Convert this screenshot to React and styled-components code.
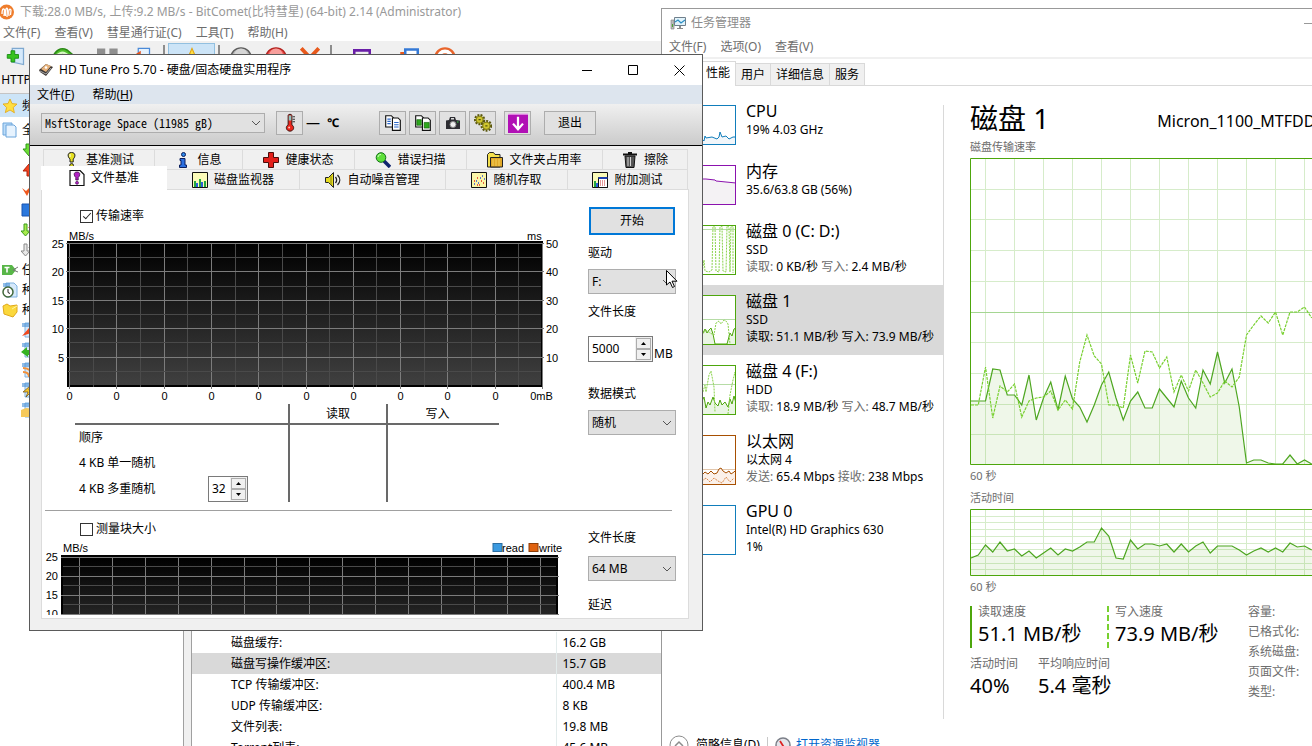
import { useState } from "react";
import styled, { createGlobalStyle, css } from "styled-components";

const GlobalStyle = createGlobalStyle`
  *, *::before, *::after {
    box-sizing: border-box;
  }

  body {
    margin: 0;
    background: #fff;
    color: #000;
    font-family: "Noto Sans", "Noto Sans CJK SC", sans-serif;
    font-size: 12px;
    line-height: 16px;
  }

  button, input, select {
    font: inherit;
    color: inherit;
    margin: 0;
    padding: 0;
    border-radius: 0;
  }

  svg {
    display: block;
    flex: none;
  }

  h1, h2, p, ul, dl, dd {
    margin: 0;
    padding: 0;
    font-weight: 400;
  }
`;

const Desktop = styled.main`
  position: relative;
  height: 100vh;
  overflow: hidden;
  white-space: nowrap;
`;

/* ---------- shared window parts ---------- */

const MenuBar = styled.nav`
  display: flex;
  flex: none;
  align-items: center;
  gap: ${(props) => props.$gap || 14}px;
  height: ${(props) => props.$height}px;
  padding-left: ${(props) => props.$indent}px;
  background: ${(props) => props.$bg || "transparent"};
  color: ${(props) => (props.$muted ? "#6d6d6d" : "#000")};
`;

const MenuItem = styled.button`
  border: 0;
  background: none;
`;

const Icon = ({ size = 16, children, ...rest }) => (
  <svg width={size} height={size} viewBox="0 0 16 16" aria-hidden="true" {...rest}>
    {children}
  </svg>
);

/* ---------- icons ---------- */

const CometIcon = () => (
  <Icon>
    <circle cx="6.500" cy="8" r="7.500" fill="#ef7d2c" />
    <path d="M2 10C2 4 4 4 4.500 6L4 12M5.500 12C5 4 7 3 7.500 5L7 13M9 12C8 5 10 4 11 6L10.500 11" stroke="#fff" strokeWidth="1.300" fill="none" />
  </Icon>
);

const DocIcon = ({ children }) => (
  <Icon>
    <path d="M4 1h8l3 3v11H4z" fill="#d5e9fb" stroke="#7fb2e0" />
    <path d="M1 1h7v4H1z" fill="#4b93d8" opacity=".6" />
    {children}
  </Icon>
);

const AddDocIcon = () => (
  <Icon size={20}>
    <path d="M5 1h9v13l-9-2z" fill="#d5e9fb" stroke="#7fa9d0" />
    <path d="M4 3h3v3h3v3H7v3H4V9H1V6h3z" fill="#35c31f" stroke="#168a10" strokeWidth=".7" />
  </Icon>
);

const StarIcon = ({ size }) => (
  <Icon size={size}>
    <path d="M8 1l2 4.600 5 .5-3.800 3.400 1.200 5.300L8 12l-4.700 2.600 1.300-5.100L1 6l5-.4z" fill="#ffdf42" stroke="#e2a412" strokeWidth=".8" />
  </Icon>
);

const PagesIcon = () => (
  <Icon>
    <path d="M1 1h9v12H1z" fill="#bcdcf8" stroke="#6da6dc" />
    <path d="M4 3h8l2 2v10H4z" fill="#e7f3fe" stroke="#6da6dc" />
  </Icon>
);

const ArrowIcon = ({ color, edge, up }) => (
  <Icon transform={up ? "rotate(180)" : undefined}>
    <path d="M5 2h5v5h4l-6 7-6-7h3z" fill={color} stroke={edge} />
  </Icon>
);

const SwapIcon = ({ color, edge, other }) => (
  <Icon>
    <path d="M3 2h3v7h3l-4.500 5L0 9h3z" fill={color} stroke={edge} />
    <path d="M10 14V6H7l4-4 4 4h-2v8z" fill={other} />
  </Icon>
);

const CheckIcon = () => (
  <Icon>
    <path d="M1 6l4 3 7-7-6 12z" fill="#f0581d" />
  </Icon>
);

const BlockIcon = () => (
  <Icon>
    <path d="M1 2h12v12H1z" fill="#2b78dd" stroke="#1b55b0" />
  </Icon>
);

const TagIcon = () => (
  <Icon>
    <path d="M0 3h10l4 5-4 5H0z" fill="#58b648" />
    <path d="M2.500 5.500h5M5 5.500v5" stroke="#fff" strokeWidth="1.600" />
    <path d="M11 8l5-3M11 8l5 2" stroke="#777" />
  </Icon>
);

const ClockIcon = () => (
  <DocIcon>
    <circle cx="6" cy="10" r="5" fill="#fff" stroke="#41683a" strokeWidth="1.500" />
    <path d="M6 7v3.500l2 1" stroke="#222" fill="none" />
  </DocIcon>
);

const FolderIcon = () => (
  <Icon>
    <path d="M1 4l4-2 3 2 7-1v7l-4 5-9-3z" fill="#fbd83c" stroke="#e0a91b" />
    <path d="M10 7l5-3" stroke="#fff3a0" />
  </Icon>
);

const DriveIcon = () => (
  <Icon>
    <path d="M1 8l7-6 7 3-7 9-6-4z" fill="#3c3633" />
    <path d="M3 7l5-5 5 2-5 6z" fill="#e6b27c" />
    <circle cx="8" cy="5.500" r="1.300" fill="#fff" />
    <path d="M2 9l6 3 5-6" stroke="#aaa" fill="none" />
  </Icon>
);

const MonitorIcon = () => (
  <Icon>
    <path d="M1 5h3v9H1z" fill="#bbb" stroke="#8a8a8a" strokeWidth=".7" />
    <path d="M2 9h1v3H2z" fill="#4aa530" />
    <path d="M4.500 2.500h11v8h-11z" fill="#e2f3fb" stroke="#70808c" />
    <path d="M5 7l3-2 3 3 4-3" stroke="#2a8ec4" fill="none" strokeWidth="1.200" />
    <path d="M9 11h2v2H9zM7 13h6v1H7z" fill="#8a8a8a" />
  </Icon>
);

const ThermoIcon = () => (
  <Icon size={20}>
    <path d="M6.500 2c0-1.300 3-1.300 3 0v7.500c2.600 1.500 1.400 5-1.500 5s-4.100-3.500-1.500-5z" fill="#e8261c" stroke="#3b1613" strokeWidth=".8" />
    <path d="M7 2h2v4H7z" fill="#8fc4c0" />
    <path d="M10 3h2M10 5h2M10 7h2" stroke="#333" strokeWidth=".8" />
    <circle cx="7.300" cy="11.500" r=".8" fill="#ffc2bb" />
  </Icon>
);

const CopyIcon = ({ picture }) => (
  <Icon size={18}>
    <path d="M1.500 1.500h5l2 2v8h-7z" fill="#fff" stroke="#111" />
    <path d="M7.500 3.500h5l2 2v9h-7z" fill="#fff" stroke="#111" />
    {picture ? (
      <path d="M2.500 5h4v5h-4zM9 7.500h4.500v5H9z" fill="#2da81c" stroke="#14620c" strokeWidth=".6" />
    ) : (
      <path d="M3 4.500h3M3 6.500h3M3 8.500h3M9 7.500h4M9 9.500h4M9 11.500h4" stroke="#2b67c9" />
    )}
  </Icon>
);

const CameraIcon = () => (
  <Icon size={16}>
    <path d="M1 5.500l3-.5 1-3h5l1 3 4 .5V14H1z" fill="#2e2e33" />
    <path d="M6 3h3v1.500H6z" fill="#ddd" />
    <circle cx="8" cy="9.500" r="3" fill="#efefef" stroke="#888" />
    <path d="M12 7h1.500" stroke="#39d048" />
  </Icon>
);

const GearsIcon = () => (
  <Icon size={18}>
    <circle cx="5" cy="5" r="3.800" fill="none" stroke="#59560d" strokeWidth="2.400" strokeDasharray="1.600 1" />
    <circle cx="5" cy="5" r="3" fill="#cfc62e" stroke="#8a8418" />
    <circle cx="11" cy="10.500" r="4" fill="none" stroke="#59560d" strokeWidth="2.400" strokeDasharray="1.600 1" />
    <circle cx="11" cy="10.500" r="3.200" fill="#cfc62e" stroke="#8a8418" />
    <path d="M4 5h2M10 10.500h2" stroke="#59560d" />
  </Icon>
);

const SaveIcon = () => (
  <Icon size={20}>
    <path d="M0 1h16v15H0z" fill="#b110b5" />
    <path d="M0 1h16" stroke="#e38be5" />
    <path d="M8 3v9M4 8.500l4 4.500 4-4.500" stroke="#fff" strokeWidth="1.800" fill="none" />
  </Icon>
);

const BulbIcon = () => (
  <Icon>
    <path d="M7.500.5c4.500 0 4 4.500 1.700 6.500V10H6V7C3.500 5 3 .5 7.500.5z" fill="#e6e021" stroke="#222" />
    <circle cx="7.600" cy="13.500" r="1.900" fill="#d6cf1c" stroke="#222" />
    <path d="M6 2v3" stroke="#fff" />
  </Icon>
);

const InfoIcon = () => (
  <Icon>
    <circle cx="8.500" cy="2.500" r="2" fill="#2b86e8" stroke="#0a1d5c" />
    <path d="M5 6.500h5V13h1.500v2.500H4.500V13H6V8.500H5z" fill="#2b6fe0" stroke="#0a1d5c" />
  </Icon>
);

const CrossIcon = () => (
  <Icon>
    <path d="M5.500.5h5v5h5v5h-5v5h-5v-5h-5v-5h5z" fill="#e3201b" stroke="#4b0c0a" />
  </Icon>
);

const LensIcon = () => (
  <Icon>
    <path d="M9 9l6 6" stroke="#10246e" strokeWidth="3.500" />
    <circle cx="6" cy="5.500" r="4.800" fill="#5ee03a" stroke="#14701a" />
    <path d="M3 5c0-2 2-2.500 3-2.500" stroke="#d8ffd0" fill="none" />
  </Icon>
);

const YellowFolderIcon = () => (
  <Icon>
    <path d="M.5 15V2.500l2-2h4l1.500 2h5V15z" fill="#f4e04e" stroke="#222" />
    <path d="M3.500 5.500h12V15h-12z" fill="#e0a828" stroke="#222" />
    <path d="M6 7v7M9 7v7M12 7v7" stroke="#f2cf5c" />
  </Icon>
);

const TrashIcon = () => (
  <Icon>
    <path d="M1 2.500h14M6 1h4" stroke="#111" strokeWidth="2" />
    <path d="M3 4h10l-1 11.500H4z" fill="#555" stroke="#111" />
    <path d="M6 5v9M8.500 5v9" stroke="#d5d5d5" />
  </Icon>
);

const FileBenchIcon = () => (
  <Icon>
    <path d="M1 .5h10l4 4v11H1z" fill="#fff" stroke="#111" strokeWidth="1.200" />
    <path d="M8 2c4 0 3 4 1.200 5.500V10H6.800V7.500C5 6 4 2 8 2z" fill="#b222c4" stroke="#3c0a44" strokeWidth=".8" />
    <circle cx="8" cy="12.800" r="1.500" fill="#b222c4" stroke="#3c0a44" strokeWidth=".6" />
  </Icon>
);

const BarsIcon = () => (
  <Icon>
    <path d="M.5.5h15v15H.5z" fill="#fbfbb8" stroke="#111" />
    <path d="M2 15V9h2v6M7 15V7h2v8M12 15V9h2v6" fill="#22a83c" />
    <path d="M4 15v-4h2v4M9 15v-5h2v5" fill="#2c5fd8" />
  </Icon>
);

const SpeakerIcon = () => (
  <Icon>
    <path d="M.5 5.500h3l5-5v15l-5-5h-3z" fill="#e6dc1f" stroke="#222" />
    <path d="M6 4v9" stroke="#8a8418" />
    <path d="M10.500 5c1.500 2 1.500 4 0 6M12.500 3c3 3 3 7 0 10" stroke="#222" fill="none" strokeWidth="1.300" />
  </Icon>
);

const DotsIcon = () => (
  <Icon>
    <path d="M.5.5h15v15H.5z" fill="#fbf6a8" stroke="#111" />
    <path d="M3 12h1M5 9h1M7 11h1M9 6h1M11 4h1M13 7h1" stroke="#2c4fd8" strokeWidth="1.500" />
    <path d="M3 9h1M6 6h1M8 13h1M10 9h1M12 11h1M6 13h1" stroke="#df2a1c" strokeWidth="1.500" />
  </Icon>
);

const ExtraIcon = () => (
  <Icon>
    <path d="M.5.5h15v15H.5z" fill="#fbfbb8" stroke="#111" />
    <path d="M2 15V9h2v6" fill="#22a83c" />
    <path d="M4 15v-4h2v4" fill="#2c5fd8" />
    <path d="M6.500 5.500h9v10h-9z" fill="#fff" stroke="#111" />
    <path d="M6.500 6h9" stroke="#1e3fae" strokeWidth="2" />
    <path d="M8 9h6M8 11h6M8 13h6" stroke="#c33" strokeDasharray="1 1" />
  </Icon>
);

const Chevron = styled((props) => (
  <svg width="10" height="6" viewBox="0 0 10 6" aria-hidden="true" {...props}>
    <path d="M1 1l4 4 4-4" fill="none" stroke="#555" />
  </svg>
))`
  position: absolute;
  right: 4px;
  top: calc(50% - 3px);
  pointer-events: none;
`;

/* ---------- BitComet ---------- */

const CometWindow = styled.section`
  position: absolute;
  inset: 0 auto 0 0;
  width: 668px;
  display: flex;
  flex-direction: column;
  background: #fff;
`;

const CometTitle = styled.header`
  display: flex;
  align-items: center;
  gap: 4px;
  height: 24px;
  color: #999;
`;

const CometToolbar = styled.div`
  display: flex;
  height: 53px;
  flex: none;
  background: #f0f0f0;
  border-bottom: 1px solid #c4c4c4;
`;

const ToolButton = styled.button`
  display: flex;
  flex-direction: column;
  align-items: center;
  gap: 5px;
  width: ${(props) => props.$width}px;
  padding-top: 6px;
  border: 0;
  background: none;

  ${(props) =>
    props.$active &&
    css`
      margin: 2px 3px;
      padding-top: 3px;
      background: #cce4f7;
      border: 1px solid #92c0e0;
    `}
`;

const ToolDivider = styled.span`
  width: 2px;
  margin: 4px 0;
  background: #8d8d8d;
`;

const CometBody = styled.div`
  flex: 1;
  min-height: 0;
  display: grid;
  grid-template-columns: 183px 9px 1fr;
`;

const Tree = styled.ul`
  list-style: none;
  overflow: hidden;
`;

const TreeItem = styled.li`
  display: flex;
  align-items: center;
  gap: 4px;
  height: ${(props) => (props.$selected ? 23 : 20)}px;
  margin-bottom: ${(props) => (props.$selected ? 3 : 0)}px;
  padding-left: ${(props) => (props.$nested ? 21 : 2)}px;
  background: ${(props) => (props.$selected ? "#cce4f7" : "none")};
`;

const Splitter = styled.div`
  background: #f0f0f0;
  border: solid #a0a0a0;
  border-width: 0 1px;
`;

const CometMain = styled.div`
  display: flex;
  flex-direction: column;
  overflow: hidden;
`;

const TaskPane = styled.div`
  flex: 0 0 538px;
`;

const StatsTable = styled.table`
  width: 100%;
  border-collapse: collapse;
  text-align: left;

  tr {
    height: 21px;
  }

  th {
    width: 364px;
    padding: 0 0 0 39px;
    font-weight: 400;
    border-right: 1px solid #e3ecec;
  }

  td {
    padding: 0 0 0 6px;
  }
`;

const StatsRow = styled.tr`
  background: ${(props) => (props.$selected ? "#d9d9d9" : "none")};
`;

const BallIcon = ({ color, edge }) => (
  <Icon size={22}>
    <circle cx="8" cy="8" r="7.400" fill={color} stroke={edge} />
    <path d="M3 6a5 5 0 0 1 10 0z" fill="#fff" opacity=".45" />
  </Icon>
);

const toolbarItems = [
  { id: "http", width: 32, icon: <AddDocIcon />, label: "HTTP" },
  { id: "open", width: 64, icon: <Icon size={24}><path d="M0 8c2-6 6-8 10-6l6 5-5 5z" fill="#4fbf2a" stroke="#2b8a15" /><path d="M3 6c3-3 5-3 8 0" stroke="#d6f5c3" fill="none" strokeWidth="1.500" /></Icon> },
  { id: "pause", width: 24, icon: <Icon size={22}><path d="M0 1h6v14H0zM9 1h6v14H9z" fill="#8f8f8f" /></Icon> },
  { id: "remove", width: 43, icon: <Icon size={20}><path d="M5 1h9v14H5z" fill="#e6f2fd" stroke="#4b8ad8" /><path d="M1 7l6-4v6z" fill="#e8531c" /></Icon> },
  { id: "d1", divider: true },
  { id: "fav", width: 47, icon: <StarIcon size={22} />, active: true },
  { id: "d2", divider: true },
  { id: "stop", width: 42, icon: <BallIcon color="#b4b4b4" edge="#5c5c5c" /> },
  { id: "hot", width: 28, icon: <BallIcon color="#f0504c" edge="#b32420" /> },
  { id: "delete", width: 40, icon: <Icon size={20}><path d="M1 1l13 14M15 1L2 15" stroke="#e8591c" strokeWidth="3" /></Icon> },
  { id: "d3", divider: true },
  { id: "tv", width: 60, icon: <Icon size={18}><path d="M1 3h14v11H1z" fill="#eee" stroke="#6a1fa8" strokeWidth="2.500" /></Icon> },
  { id: "share", width: 34, icon: <Icon size={20}><path d="M5 2h10v11H5z" fill="#fff" stroke="#3579d6" strokeWidth="2" /><path d="M1 4h3v3H1z" fill="#e8591c" /></Icon> },
  { id: "home", width: 38, icon: <Icon size={22}><circle cx="8" cy="8" r="7" fill="#fff" stroke="#e8652c" strokeWidth="1.800" /><circle cx="8" cy="8" r="3" fill="none" stroke="#e8652c" /></Icon> },
];

const treeItems = [
  { icon: <StarIcon />, label: "频", selected: true },
  { icon: <PagesIcon />, label: "全" },
  { icon: <ArrowIcon color="#6cdd35" edge="#2f9a16" />, nested: true },
  { icon: <ArrowIcon color="#f2421f" edge="#b3220b" up />, nested: true },
  { icon: <CheckIcon />, nested: true },
  { icon: <BlockIcon />, nested: true },
  { icon: <SwapIcon color="#a8ea4d" edge="#3c9c1c" other="#e03a1c" />, nested: true },
  { icon: <SwapIcon color="#e8e8e8" edge="#8a8a8a" other="#9a9a9a" />, nested: true },
  { icon: <TagIcon />, label: "任" },
  { icon: <ClockIcon />, label: "种" },
  { icon: <FolderIcon />, label: "种" },
  { icon: <DocIcon><path d="M1 14l7-8 5 4z" fill="#f0481d" /></DocIcon>, nested: true },
  { icon: <DocIcon><path d="M0 10l6-5v3h8v5H7v2z" fill="#35b322" /></DocIcon>, nested: true },
  { icon: <DocIcon><path d="M2 6c6 0 10 4 10 9M2 10c4 0 6 2 6 5" stroke="#f3913a" fill="none" strokeWidth="2" /></DocIcon>, nested: true },
  { icon: <DocIcon><path d="M9 4l-7 6h5l-2 5 7-7H8z" fill="#f6c52b" stroke="#6b4d12" strokeWidth=".7" /></DocIcon>, nested: true },
  { icon: <DocIcon><path d="M0 8l5-2 8 1v8H0z" fill="#f5c95b" /></DocIcon>, nested: true },
];

const stats = [
  ["磁盘缓存:", "16.2 GB"],
  ["磁盘写操作缓冲区:", "15.7 GB"],
  ["TCP 传输缓冲区:", "400.4 MB"],
  ["UDP 传输缓冲区:", "8 KB"],
  ["文件列表:", "19.8 MB"],
  ["Torrent列表:", "45.6 MB"],
];

function BitComet() {
  return (
    <CometWindow>
      <CometTitle>
        <CometIcon />
        下载:28.0 MB/s, 上传:9.2 MB/s - BitComet(比特彗星) (64-bit) 2.14 (Administrator)
      </CometTitle>
      <MenuBar $height={17} $indent={3} $muted>
        {["文件(F)", "查看(V)", "彗星通行证(C)", "工具(T)", "帮助(H)"].map((item) => (
          <MenuItem key={item}>{item}</MenuItem>
        ))}
      </MenuBar>
      <CometToolbar>
        {toolbarItems.map((item) =>
          item.divider ? (
            <ToolDivider key={item.id} />
          ) : (
            <ToolButton key={item.id} $width={item.width} $active={item.active} aria-label={item.id}>
              {item.icon}
              {item.label}
            </ToolButton>
          )
        )}
      </CometToolbar>
      <CometBody>
        <Tree>
          {treeItems.map((item, index) => (
            <TreeItem key={index} $selected={item.selected} $nested={item.nested}>
              {item.icon}
              {item.label}
            </TreeItem>
          ))}
        </Tree>
        <Splitter />
        <CometMain>
          <TaskPane />
          <StatsTable>
            <tbody>
              {stats.map(([name, value], index) => (
                <StatsRow key={name} $selected={index === 1}>
                  <th scope="row">{name}</th>
                  <td>{value}</td>
                </StatsRow>
              ))}
            </tbody>
          </StatsTable>
        </CometMain>
      </CometBody>
    </CometWindow>
  );
}

/* ---------- Task manager ---------- */

const TaskWindow = styled.section`
  position: absolute;
  inset: 8px -80px 0 661px;
  display: flex;
  flex-direction: column;
  background: #fff;
  border: solid #999;
  border-width: 1px 0 0 1px;
`;

const TaskTitle = styled.header`
  display: flex;
  flex: none;
  align-items: center;
  justify-content: space-between;
  height: 28px;
  padding: 0 78px 0 8px;
  color: #8c8c8c;

  h1 {
    display: flex;
    align-items: center;
    gap: 5px;
    font-size: 12px;
  }
`;

const TaskTabs = styled.div`
  display: flex;
  align-items: flex-end;
  flex: none;
  height: 29px;
  padding-left: 39px;
  border-top: 2px solid #f0f0f0;
  border-bottom: 1px solid #d9d9d9;
`;

const TaskTab = styled.button`
  height: 22px;
  padding: 0 5px;
  background: #f0f0f0;
  border: 1px solid #d9d9d9;
  border-width: 1px 1px 0 0;

  &[aria-selected="true"] {
    height: 25px;
    margin-bottom: -1px;
    padding-bottom: 3px;
    background: #fff;
  }
`;

const TaskBody = styled.div`
  display: grid;
  grid-template-columns: 282px 1fr;
  gap: 26px;
  height: 614px;
  flex: none;
  margin-top: 19px;
`;

const DeviceList = styled.div`
  border-right: 1px solid #d9d9d9;
`;

const Device = styled.button`
  display: grid;
  grid-template-columns: 60px 1fr;
  gap: 10px;
  width: 100%;
  height: ${(props) => (props.$short ? 60 : 70)}px;
  padding: 10px 0 10px 14px;
  overflow: hidden;
  text-align: left;
  border: 0;
  background: ${(props) => (props.$selected ? "#d9d9d9" : "none")};
  color: #000;

  &:first-child {
    margin-top: -10px;
  }

  em {
    font-style: normal;
    color: ${(props) => (props.$selected ? "#000" : "#6d6d6d")};
  }
`;

const DeviceText = styled.span`
  display: flex;
  flex-direction: column;
  margin-top: -4px;
  line-height: 17px;

  strong {
    font-size: 16px;
    font-weight: 400;
    line-height: 20px;
  }
`;

const Details = styled.div`
  min-width: 0;
`;

const DiskHeading = styled.header`
  display: flex;
  align-items: flex-end;
  gap: 108px;
  height: 34px;
  margin-top: -4px;

  h2 {
    font-size: 28px;
    line-height: 34px;
  }

  span {
    font-size: 16px;
    line-height: 28px;
  }
`;

const Caption = styled.p`
  font-size: 11px;
  line-height: ${(props) => props.$line || 22}px;
  color: #6d6d6d;
`;

const Readings = styled.dl`
  display: grid;
  grid-template-columns: 278px 1fr;
  margin-top: 8px;
`;

const ReadingRow = styled.div`
  display: flex;
  gap: 20px;
  margin-bottom: 10px;
`;

const Reading = styled.div`
  height: 42px;

  ${(props) =>
    props.$bar &&
    css`
      width: 117px;
      padding-left: 6px;
      border-left: 2px ${props.$bar};
    `}

  dt {
    line-height: 12px;
    color: #6d6d6d;
  }

  dd {
    font-size: 20px;
    line-height: 32px;
  }
`;

const Properties = styled.div`
  color: #6d6d6d;
  line-height: 20px;
  margin-top: -4px;
`;

const TaskFooter = styled.footer`
  display: flex;
  flex: none;
  align-items: center;
  gap: 7px;
  margin-top: 16px;
  padding-left: 7px;

  a {
    display: flex;
    align-items: center;
    gap: 5px;
    padding-left: 7px;
    border-left: 1px solid #c8c8c8;
    color: #0066cc;
    text-decoration: none;
  }
`;

const Thumb = ({ height = 50, color, children }) => (
  <svg width="60" height={height} aria-hidden="true">
    <rect width="60" height={height} fill="#fff" />
    {children}
    <rect x=".5" y=".5" width="59" height={height - 1} fill="none" stroke={color} />
  </svg>
);

const devices = [
  {
    name: "CPU",
    short: true,
    lines: ["19% 4.03 GHz"],
    thumb: (
      <Thumb height={40} color="#117dbb">
        <path d="M0 34L26 34 28 36 29 31 30 33 36 32 41 34 43 32 44 27 46 32 50 31 53 34 57 32H60V40H0z" fill="#f1f6fa" stroke="#117dbb" />
      </Thumb>
    ),
  },
  {
    name: "内存",
    short: true,
    lines: ["35.6/63.8 GB (56%)"],
    thumb: (
      <Thumb height={40} color="#8b12ae">
        <path d="M0 14H30L39 15 40 16 50 17 60 18V40H0z" fill="#f4f2f4" stroke="#8b12ae" />
      </Thumb>
    ),
  },
  {
    name: "磁盘 0 (C: D:)",
    lines: ["SSD", <><em>读取:</em> 0 KB/秒 <em>写入:</em> 2.4 MB/秒</>],
    thumb: (
      <Thumb color="#4da60c">
        <path d="M0 4.500H60" stroke="#b6dca6" />
        <path d="M0 48H26L28 35 29 46 33 47 36 45 37 1H39L40 46 43 47 44 2 46 1 47 46 50 47 51 1 53 2 54 47 55 1 57 1V48" fill="none" stroke="#8ad34b" strokeDasharray="2 1" />
      </Thumb>
    ),
  },
  {
    name: "磁盘 1",
    selected: true,
    lines: ["SSD", <><em>读取:</em> 51.1 MB/秒 <em>写入:</em> 73.9 MB/秒</>],
    thumb: (
      <Thumb color="#4da60c">
        <path d="M0 24.500H60" stroke="#b6dca6" />
        <path d="M0 38L27 38 29 34 31 38 33 35 35 33 37 39 39 49H51L54 38 56 41 58 34 60 33V50H0z" fill="#eaf5e4" stroke="#4da60c" />
        <path d="M26 40L30 35 34 38 38 40 40 28 43 26 45 29 48 25 50 26 52 29 54 49" fill="none" stroke="#8ad34b" strokeDasharray="2 1" />
      </Thumb>
    ),
  },
  {
    name: "磁盘 4 (F:)",
    lines: ["HDD", <><em>读取:</em> 18.9 MB/秒 <em>写入:</em> 48.7 MB/秒</>],
    thumb: (
      <Thumb color="#4da60c">
        <path d="M0 19.500H60" stroke="#b6dca6" />
        <path d="M0 40L26 36 28 32 30 43 32 37 34 40 37 32 39 38 42 41 44 35 46 40 49 37 52 42 54 34 56 39 58 31 60 38V50H0z" fill="#eaf5e4" stroke="#4da60c" />
        <path d="M26 30L29 20 30 27 33 10 35 6 38 22 39 47M52 49L54 30 57 15 59 7 60 20" fill="none" stroke="#8ad34b" strokeDasharray="2 1" />
      </Thumb>
    ),
  },
  {
    name: "以太网",
    lines: ["以太网 4", <><em>发送:</em> 65.4 Mbps <em>接收:</em> 238 Mbps</>],
    thumb: (
      <Thumb color="#a74f01">
        <path d="M0 34.500H60" stroke="#e2c6ab" />
        <path d="M0 40L26 40 29 37 32 39 35 36 38 39 41 38 43 34 45 33 47 36 50 38 53 36 55 39 58 37 60 35V50H0z" fill="#fbf1ea" stroke="#a74f01" />
        <path d="M26 46L30 43 34 47 38 43 42 46 46 48 50 42 54 47 58 43" fill="none" stroke="#d98b50" strokeDasharray="2 1" />
      </Thumb>
    ),
  },
  {
    name: "GPU 0",
    lines: ["Intel(R) HD Graphics 630", "1%"],
    thumb: <Thumb color="#117dbb" />,
  },
];

const readSeries = [
  243, 243, 243, 211, 212, 237, 237, 247, 217, 262, 240, 224, 252, 218, 241, 249, 264, 247, 227, 214, 240, 262, 243, 234,
  250, 250, 231, 240, 249, 223, 240, 250, 212, 226, 194, 225, 211, 249, 305, 302, 302, 305, 306, 306, 297, 306, 302, 306,
];
const writeSeries = [
  247, 247, 209, 260, 228, 234, 226, 259, 243, 240, 239, 233, 252, 242, 251, 204, 177, 198, 206, 247, 247, 250, 197, 225,
  193, 194, 210, 199, 234, 217, 233, 212, 225, 239, 235, 223, 229, 219, 177, 167, 158, 165, 154, 177, 154, 154, 149, 160,
];
const activeSeries = [
  49, 46, 36, 43, 33, 42, 40, 47, 42, 49, 44, 39, 46, 40, 42, 38, 33, 33, 19, 27, 49, 50, 31, 40, 35, 35, 37, 35, 43, 35,
  43, 37, 33, 44, 37, 37, 37, 41, 46, 42, 39, 43, 39, 43, 34, 38, 37, 41,
];

const toPoints = (series) => series.map((y, index) => `${1 + index * 7.25},${y}`).join(" ");

function UsageChart({ height, solid, dashed, midline }) {
  const end = 1 + (solid.length - 1) * 7.25;
  const rows = [1, 2, 3, 4, 5, 6, 7, 8, 9];

  return (
    <svg width="100%" height={height} role="img" aria-label="60 秒">
      <g stroke="#d6ecca" shapeRendering="crispEdges">
        {Array.from({ length: 15 }, (_, index) => (
          <path key={index} d={`M${15.5 + index * 29} 0V${height}`} />
        ))}
        {rows.map((row) => {
          const y = Math.round((row * height) / 10) + 0.5;
          return <path key={row} d={`M0 ${y}H600`} stroke={midline && row === 5 ? "#a5d692" : undefined} />;
        })}
      </g>
      <polygon points={`1,${height} ${toPoints(solid)} ${end},${height}`} fill="#4da60c" fillOpacity=".09" />
      <polyline points={toPoints(solid)} fill="none" stroke="#4da620" strokeWidth="1.200" />
      {dashed && (
        <polyline points={toPoints(dashed)} fill="none" stroke="#78d030" strokeWidth="1.200" strokeDasharray="3 1" />
      )}
      <path d={`M600 .5H.5V${height - 0.5}H600`} fill="none" stroke="#4da60c" />
    </svg>
  );
}

function TaskManager() {
  return (
    <TaskWindow>
      <TaskTitle>
        <h1>
          <MonitorIcon />
          任务管理器
        </h1>
        <svg width="10" height="10" aria-hidden="true">
          <path d="M0 5.500H10" stroke="#999" />
        </svg>
      </TaskTitle>
      <MenuBar $height={20} $indent={7} $muted>
        {["文件(F)", "选项(O)", "查看(V)"].map((item) => (
          <MenuItem key={item}>{item}</MenuItem>
        ))}
      </MenuBar>
      <TaskTabs role="tablist">
        {["性能", "用户", "详细信息", "服务"].map((tab, index) => (
          <TaskTab key={tab} role="tab" aria-selected={index === 0}>
            {tab}
          </TaskTab>
        ))}
      </TaskTabs>
      <TaskBody>
        <DeviceList>
          {devices.map((device) => (
            <Device key={device.name} $short={device.short} $selected={device.selected}>
              {device.thumb}
              <DeviceText>
                <strong>{device.name}</strong>
                {device.lines.map((line, index) => (
                  <span key={index}>{line}</span>
                ))}
              </DeviceText>
            </Device>
          ))}
        </DeviceList>
        <Details>
          <DiskHeading>
            <h2>磁盘 1</h2>
            <span>Micron_1100_MTFDD</span>
          </DiskHeading>
          <Caption $line={23}>磁盘传输速率</Caption>
          <UsageChart height={307} solid={readSeries} dashed={writeSeries} midline />
          <Caption>60 秒</Caption>
          <Caption>活动时间</Caption>
          <UsageChart height={67} solid={activeSeries} />
          <Caption>60 秒</Caption>
          <Readings>
            <div>
              <ReadingRow>
                <Reading $bar="solid #4da60c">
                  <dt>读取速度</dt>
                  <dd>51.1 MB/秒</dd>
                </Reading>
                <Reading $bar="dashed #78d030">
                  <dt>写入速度</dt>
                  <dd>73.9 MB/秒</dd>
                </Reading>
              </ReadingRow>
              <ReadingRow>
                <Reading>
                  <dt>活动时间</dt>
                  <dd>40%</dd>
                </Reading>
                <Reading>
                  <dt>平均响应时间</dt>
                  <dd>5.4 毫秒</dd>
                </Reading>
              </ReadingRow>
            </div>
            <Properties>
              {["容量:", "已格式化:", "系统磁盘:", "页面文件:", "类型:"].map((item) => (
                <dt key={item}>{item}</dt>
              ))}
            </Properties>
          </Readings>
        </Details>
      </TaskBody>
      <TaskFooter>
        <svg width="20" height="20" aria-hidden="true">
          <circle cx="10" cy="10" r="9" fill="#fff" stroke="#8c8c8c" />
          <path d="M6 11l4-4 4 4" fill="none" stroke="#8c8c8c" strokeWidth="1.500" />
        </svg>
        <MenuItem>简略信息(D)</MenuItem>
        <a href="#monitor">
          <Icon>
            <circle cx="8" cy="8" r="7" fill="#e4e4ea" stroke="#7b7f88" strokeWidth="1.500" />
            <path d="M5 4l5 8" stroke="#d22" strokeWidth="1.800" />
          </Icon>
          打开资源监视器
        </a>
      </TaskFooter>
    </TaskWindow>
  );
}

/* ---------- HD Tune ---------- */

const TuneWindow = styled.section`
  position: absolute;
  left: 29px;
  top: 54px;
  width: 674px;
  display: flex;
  flex-direction: column;
  background: #f0f0f0;
  border: 1px solid #5a5a5a;
`;

const TuneTitle = styled.header`
  display: flex;
  align-items: center;
  height: 30px;
  padding-left: 8px;
  background: #fff;

  h1 {
    flex: 1;
    margin-left: 5px;
    font-size: 12px;
  }
`;

const CaptionButton = styled.button`
  display: grid;
  place-items: center;
  width: 46px;
  height: 29px;
  border: 0;
  background: none;
`;

const TuneToolbar = styled.div`
  display: flex;
  align-items: center;
  gap: 3px;
  height: 42px;
  padding: 0 11px 4px;
  background: linear-gradient(#f0f0f0, #cbcbcb);
  border-bottom: 1px solid #000;
`;

const SquareButton = styled.button`
  display: grid;
  place-items: center;
  width: 27px;
  height: 24px;
  border: 1px solid #adadad;
  background: #e1e1e1;
`;

const ExitButton = styled(SquareButton)`
  width: 52px;
  margin-left: 10px;
`;

const Temperature = styled.output`
  display: flex;
  gap: 7px;
  width: 70px;
  font-size: 14px;

  b {
    font-size: 12px;
  }
`;

const ToolGroup = styled.div`
  display: flex;
  gap: 3px;
  margin-right: 5px;
`;

const SelectBox = styled.span`
  position: relative;
  display: block;
  width: ${(props) => props.$width || "100%"};

  select {
    appearance: none;
    display: block;
    width: 100%;
    height: ${(props) => props.$height || 25}px;
    padding: 0 3px;
    border: 1px solid #adadad;
    background: #e1e1e1;
    font-family: ${(props) => (props.$mono ? '"Noto Sans Mono CJK SC", "Liberation Mono", monospace' : "inherit")};
  }
`;

const TabRows = styled.div`
  padding: 3px 14px 0 11px;
`;

const TabRow = styled.div`
  display: grid;
  grid-template-columns: ${(props) => props.$columns};
  height: 20px;
  padding-left: ${(props) => (props.$front ? 0 : 2)}px;
`;

const Tab = styled.button`
  display: flex;
  align-items: center;
  justify-content: center;
  gap: 6px;
  border: 1px solid #dcdcdc;
  border-width: 1px 1px 0 0;
  background: #f0f0f0;

  &:first-child {
    border-left-width: 1px;
  }

  &[aria-selected="true"] {
    position: relative;
    margin: -3px 0 -1px;
    padding-bottom: 2px;
    background: #fff;
    border-color: transparent;
  }
`;

const Panel = styled.div`
  height: 430px;
  margin: 0 13px 11px 11px;
  padding-bottom: 3px;
  background: #fff;
  border: 1px solid #dcdcdc;
`;

const PanelClip = styled.div`
  height: 100%;
  overflow: hidden;
`;

const Section = styled.div`
  display: grid;
  grid-template-columns: 1fr 88px;
  padding: ${(props) => props.$top}px 12px 8px 3px;
`;

const SectionLine = styled.hr`
  margin: 0 16px 0 3px;
  border: 0;
  border-top: 1px solid #a0a0a0;
`;

const CheckLabel = styled.label`
  display: flex;
  align-items: center;
  gap: 3px;
  width: max-content;
  margin: 1px 0 6px 35px;

  input {
    appearance: none;
    display: grid;
    place-items: center;
    width: 13px;
    height: 13px;
    border: 1px solid #333;
    background: #fff;
  }

  input:checked::after {
    content: "";
    width: 4px;
    height: 8px;
    margin-top: -2px;
    border: solid #222;
    border-width: 0 1px 1px 0;
    transform: rotate(42deg);
  }
`;

const ResultTable = styled.table`
  width: 424px;
  margin-left: 30px;
  border-collapse: collapse;
  table-layout: fixed;
  text-align: left;

  th, td {
    height: 26px;
    padding: 0 0 0 4px;
    font-weight: 400;
  }

  th + th, th + td, td + td, td + th {
    border-left: 2px solid #696969;
    padding: 0;
    text-align: center;
  }

  thead th, thead td {
    height: 20px;
    border-bottom: 2px solid #696969;
  }

  thead th:last-child {
    padding-right: 12px;
  }
`;

const RowHead = styled.span`
  display: flex;
  align-items: center;
  justify-content: space-between;
  padding-right: 40px;
`;

const Side = styled.div`
  display: flex;
  flex-direction: column;
`;

const StartButton = styled.button`
  height: 28px;
  margin: 0 1px;
  border: 2px solid #0078d7;
  background: #e1e1e1;
`;

const Field = styled.div`
  display: flex;
  flex-direction: column;
  gap: ${(props) => props.$gap || 8}px;
  margin-top: ${(props) => props.$top || 10}px;
`;

const Inline = styled.div`
  display: flex;
  align-items: flex-end;
  gap: 1px;
`;

const SpinBox = styled.span`
  display: flex;
  width: ${(props) => props.$width}px;
  height: 26px;
  border: 1px solid #7a7a7a;
  background: #fff;

  input {
    flex: 1;
    min-width: 0;
    padding-left: 3px;
    border: 0;
    background: none;
  }
`;

const SpinButtons = styled.span`
  display: grid;
  width: 17px;
  padding: 1px;
  background: #f0f0f0;

  button {
    display: grid;
    place-items: center;
    border: 1px solid #adadad;
    background: #f0f0f0;
  }
`;

const Cursor = styled.svg`
  position: absolute;
  left: 666px;
  top: 270px;
`;

function Spinner({ id, label, width, initial }) {
  const [value, setValue] = useState(initial);

  return (
    <SpinBox $width={width}>
      <input id={id} aria-label={label} value={value} onChange={(event) => setValue(Number(event.target.value) || 0)} />
      <SpinButtons>
        <button aria-label="+" onClick={() => setValue(value + 1)}>
          <svg width="5" height="3"><path d="M0 3L2.500 0 5 3z" /></svg>
        </button>
        <button aria-label="-" onClick={() => setValue(value - 1)}>
          <svg width="5" height="3"><path d="M0 0L2.500 3 5 0z" /></svg>
        </button>
      </SpinButtons>
    </SpinBox>
  );
}

function DropDown({ id, label, value, ...rest }) {
  return (
    <SelectBox {...rest}>
      <select id={id} aria-label={label} defaultValue={value}>
        <option>{value}</option>
      </select>
      <Chevron />
    </SelectBox>
  );
}

const backTabs = [
  [<BulbIcon />, "基准测试"],
  [<InfoIcon />, "信息"],
  [<CrossIcon />, "健康状态"],
  [<LensIcon />, "错误扫描"],
  [<YellowFolderIcon />, "文件夹占用率"],
  [<TrashIcon />, "擦除"],
];

const frontTabs = [
  [<FileBenchIcon />, "文件基准"],
  [<BarsIcon />, "磁盘监视器"],
  [<SpeakerIcon />, "自动噪音管理"],
  [<DotsIcon />, "随机存取"],
  [<ExtraIcon />, "附加测试"],
];

const chartFont = { fontFamily: "Liberation Sans, Arial, sans-serif", fontSize: 11 };

function TransferChart() {
  const columns = Array.from({ length: 21 }, (_, index) => Math.round(25 + index * 23.65) - 0.5);
  const rows = Array.from({ length: 10 }, (_, index) => Math.round(13 + index * 14.2) + 0.5);

  return (
    <svg width="520" height="174" role="img" aria-label="传输速率" {...chartFont}>
      <defs>
        <linearGradient id="plot" x2="0" y2="1">
          <stop offset="0" stopColor="#000" />
          <stop offset="1" stopColor="#404040" />
        </linearGradient>
      </defs>
      <rect x="22" y="11" width="476" height="146" />
      <rect x="25" y="13" width="471" height="142" fill="url(#plot)" />
      <g shapeRendering="crispEdges">
        {columns.map((x, index) => (
          <path key={x} d={`M${x} 13V${index % 2 ? 157 : 159}`} stroke={index % 2 ? "#4a4a4a" : "#7c7c7c"} />
        ))}
        {rows.map((y, index) => (
          <path key={y} d={`M${index % 2 ? 23 : 21} ${y}H${index % 2 ? 496 : 499}`} stroke={index % 2 ? "#4a4a4a" : "#7c7c7c"} />
        ))}
      </g>
      <text x="24" y="10">MB/s</text>
      <text x="482" y="10">ms</text>
      {[0, 1, 2, 3, 4].map((row) => (
        <g key={row}>
          <text x="19" y={rows[row * 2] + 4} textAnchor="end">{25 - row * 5}</text>
          <text x="501" y={rows[row * 2] + 4}>{50 - row * 10}</text>
        </g>
      ))}
      {columns.filter((_, index) => index % 2 === 0).map((x, index) => (
        <text key={x} x={index === 10 ? x - 1 : x} y="170" textAnchor="middle">{index === 10 ? "0mB" : "0"}</text>
      ))}
    </svg>
  );
}

function BlockChart() {
  return (
    <svg width="530" height="76" viewBox="0 2 530 76" role="img" aria-label="测量块大小" {...chartFont}>
      <text x="18" y="11">MB/s</text>
      <rect x="448" y="2.500" width="9" height="8" fill="#3b9ae0" stroke="#2b6ea3" />
      <text x="457" y="11">read</text>
      <rect x="484" y="2.500" width="9" height="8" fill="#e0620f" stroke="#8d3f0a" />
      <text x="494" y="11">write</text>
      <rect x="16" y="14" width="497" height="64" />
      <rect x="18" y="16" width="493" height="100" fill="url(#plot)" />
      <g shapeRendering="crispEdges">
        {Array.from({ length: 15 }, (_, index) => (
          <path key={index} d={`M${Math.round(34 + index * 32.9)}.5 16V78`} stroke="#7c7c7c" />
        ))}
        {[16, 25, 35, 44, 54, 63, 73].map((y, index) => (
          <path key={y} d={`M${index % 2 ? 18 : 16} ${y + 0.5}H${index % 2 ? 511 : 514}`} stroke={index % 2 ? "#4a4a4a" : "#7c7c7c"} />
        ))}
      </g>
      {[25, 20, 15, 10].map((tick, index) => (
        <text key={tick} x="13" y={20 + index * 19} textAnchor="end">{tick}</text>
      ))}
    </svg>
  );
}

function HdTune() {
  return (
    <TuneWindow>
      <TuneTitle>
        <DriveIcon />
        <h1>HD Tune Pro 5.70 - 硬盘/固态硬盘实用程序</h1>
        <CaptionButton aria-label="最小化">
          <svg width="10" height="11"><path d="M0 5.500H10" stroke="#000" /></svg>
        </CaptionButton>
        <CaptionButton aria-label="最大化">
          <svg width="10" height="10"><path d="M.5.5h9v9h-9z" fill="none" stroke="#000" /></svg>
        </CaptionButton>
        <CaptionButton aria-label="关闭">
          <svg width="11" height="11"><path d="M.5.5l10 10M10.500.5l-10 10" stroke="#000" /></svg>
        </CaptionButton>
      </TuneTitle>
      <MenuBar $height={19} $indent={7} $gap={18} $bg="#dde5ee">
        <MenuItem>文件(<u>F</u>)</MenuItem>
        <MenuItem>帮助(<u>H</u>)</MenuItem>
      </MenuBar>
      <TuneToolbar>
        <DropDown label="驱动器" value="MsftStorage Space (11985 gB)" $width="224px" $height={20} $mono />
        <ToolGroup />
        <SquareButton aria-label="温度"><ThermoIcon /></SquareButton>
        <Temperature>—<b>℃</b></Temperature>
        <ToolGroup>
          <SquareButton aria-label="复制文本"><CopyIcon /></SquareButton>
          <SquareButton aria-label="复制图像"><CopyIcon picture /></SquareButton>
          <SquareButton aria-label="截图"><CameraIcon /></SquareButton>
          <SquareButton aria-label="选项"><GearsIcon /></SquareButton>
        </ToolGroup>
        <SquareButton aria-label="保存"><SaveIcon /></SquareButton>
        <ExitButton>退出</ExitButton>
      </TuneToolbar>
      <TabRows role="tablist">
        <TabRow $columns="112fr 88fr 112fr 112fr 136fr 85fr">
          {backTabs.map(([icon, name]) => (
            <Tab key={name} role="tab" aria-selected={false}>{icon}{name}</Tab>
          ))}
        </TabRow>
        <TabRow $columns="126fr 133fr 146fr 122fr 120fr" $front>
          {frontTabs.map(([icon, name], index) => (
            <Tab key={name} role="tab" aria-selected={index === 0}>{icon}{name}</Tab>
          ))}
        </TabRow>
      </TabRows>
      <Panel>
        <PanelClip>
          <Section $top={17}>
            <div>
              <CheckLabel>
                <input type="checkbox" defaultChecked />
                传输速率
              </CheckLabel>
              <TransferChart />
              <ResultTable>
                <colgroup>
                  <col width="214" />
                  <col width="98" />
                  <col />
                </colgroup>
                <thead>
                  <tr>
                    <td />
                    <th scope="col">读取</th>
                    <th scope="col">写入</th>
                  </tr>
                </thead>
                <tbody>
                  <tr>
                    <th scope="row">顺序</th>
                    <td />
                    <td />
                  </tr>
                  <tr>
                    <th scope="row">4 KB 单一随机</th>
                    <td />
                    <td />
                  </tr>
                  <tr>
                    <th scope="row">
                      <RowHead>
                        4 KB 多重随机
                        <Spinner label="多重随机" width={40} initial={32} />
                      </RowHead>
                    </th>
                    <td />
                    <td />
                  </tr>
                </tbody>
              </ResultTable>
            </div>
            <Side>
              <StartButton>开始</StartButton>
              <Field>
                <label htmlFor="drive">驱动</label>
                <DropDown id="drive" value="F:" />
              </Field>
              <Field $gap={16}>
                <label htmlFor="length">文件长度</label>
                <Inline>
                  <Spinner id="length" label="文件长度" width={65} initial={5000} />
                  MB
                </Inline>
              </Field>
              <Field $top={24}>
                <label htmlFor="mode">数据模式</label>
                <DropDown id="mode" value="随机" />
              </Field>
            </Side>
          </Section>
          <SectionLine />
          <Section $top={9}>
            <div>
              <CheckLabel>
                <input type="checkbox" />
                测量块大小
              </CheckLabel>
              <BlockChart />
            </div>
            <Side>
              <Field $gap={10}>
                <label htmlFor="block">文件长度</label>
                <DropDown id="block" value="64 MB" />
              </Field>
              <Field $top={16}>
                <span>延迟</span>
              </Field>
            </Side>
          </Section>
        </PanelClip>
      </Panel>
    </TuneWindow>
  );
}

export default function App() {
  return (
    <Desktop>
      <GlobalStyle />
      <BitComet />
      <TaskManager />
      <HdTune />
      <Cursor width="12" height="19" viewBox="0 0 12 19" aria-hidden="true">
        <path d="M.5.5v14.500l3.500-3 2.500 5.500 2-1-2.500-5.300h5z" fill="#fff" stroke="#000" />
      </Cursor>
    </Desktop>
  );
}
